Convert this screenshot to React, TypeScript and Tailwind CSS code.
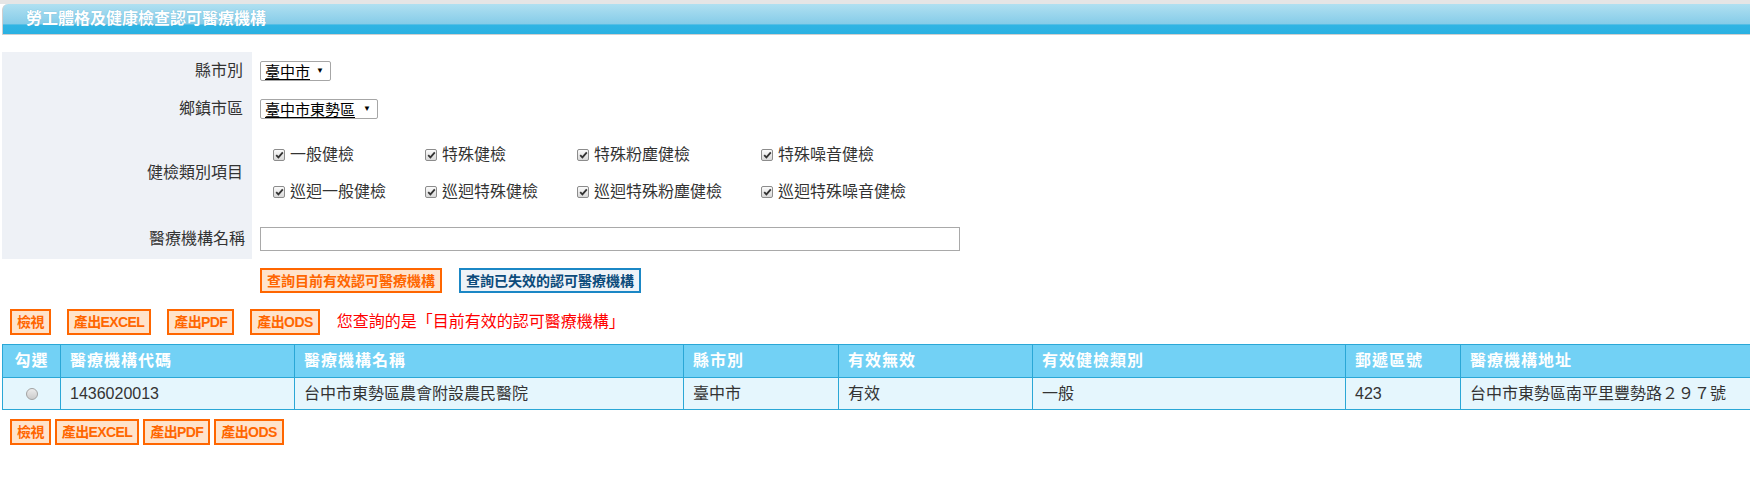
const cjk = "font-['Liberation_Sans','Noto_Sans_CJK_TC',sans-serif]";

const checks = [
  ["一般健檢", "特殊健檢", "特殊粉塵健檢", "特殊噪音健檢"],
  ["巡迴一般健檢", "巡迴特殊健檢", "巡迴特殊粉塵健檢", "巡迴特殊噪音健檢"],
];

const cols = [
  { title: "勾選", w: 58 },
  { title: "醫療機構代碼", w: 234 },
  { title: "醫療機構名稱", w: 389 },
  { title: "縣市別", w: 155 },
  { title: "有效無效", w: 194 },
  { title: "有效健檢類別", w: 313 },
  { title: "郵遞區號", w: 115 },
  { title: "醫療機構地址", w: 292 },
];

const row = ["1436020013", "台中市東勢區農會附設農民醫院", "臺中市", "有效", "一般", "423", "台中市東勢區南平里豐勢路２９７號"];

function Box() {
  return (
    <span className="inline-flex items-center justify-center w-[12px] h-[12px] border border-[#8c8c8c] rounded-[2px] bg-gradient-to-b from-[#fbfbfb] to-[#d9d9d9]">
      <svg width="9" height="8" viewBox="0 0 9 8">
        <path d="M1.2 4.2 L3.4 6.4 L7.8 1.4" stroke="#333" strokeWidth="1.8" fill="none" />
      </svg>
    </span>
  );
}

function Btn({ children }: { children: React.ReactNode }) {
  return (
    <span className="inline-flex items-center h-[26px] px-[5px] border-2 border-[#ff6600] bg-[#ffe3cb] text-[#ff6600] text-[14px] font-bold leading-none tracking-[-0.6px]">
      {children}
    </span>
  );
}

function Select({ text, w }: { text: string; w: string }) {
  return (
    <span className={`inline-flex items-center justify-between h-[20px] ${w} pl-[4px] pr-[6px] border border-[#a6a6a6] rounded-[2px] bg-white text-[15px] leading-none text-black`}>
      <span className="underline underline-offset-2">{text}</span>
      <span className="text-[8px]">▼</span>
    </span>
  );
}

export default function App() {
  return (
    <div className={`w-[1750px] h-[488px] overflow-hidden bg-white ${cjk}`}>
      <div className="h-[4px] bg-[#e5e5e5]" />
      <div className="ml-[2px] h-[31px] rounded-tl-[6px] border-l border-b border-[#cfcfcf] bg-[linear-gradient(to_bottom,#b0e0f1_0%,#86cce8_66%,#30b4e3_70%,#2ab1e2_100%)] flex items-center pl-[23px]">
        <span className="text-white text-[16px] font-bold [text-shadow:0_0_1px_#5aaed0]">勞工體格及健康檢查認可醫療機構</span>
      </div>

      <div className="mt-[17px] ml-[2px] grid grid-cols-[250px_1fr] text-[16px] text-[#333]">
        <div className="h-[38px] bg-[#eef1f6] flex items-center justify-end pr-[9px]">縣市別</div>
        <div className="h-[38px] flex items-center pl-[8px]">
          <Select text="臺中市" w="w-[71px]" />
        </div>
        <div className="h-[38px] bg-[#eef1f6] flex items-center justify-end pr-[9px]">鄉鎮市區</div>
        <div className="h-[38px] flex items-center pl-[8px]">
          <Select text="臺中市東勢區" w="w-[118px]" />
        </div>
        <div className="h-[90px] bg-[#eef1f6] flex items-center justify-end pr-[9px]">健檢類別項目</div>
        <div className="h-[90px] flex flex-col justify-center pl-[21px]">
          {checks.map((r, i) => (
            <div key={i} className="grid grid-cols-[152px_152px_184px_auto] h-[37px] items-center">
              {r.map((c) => (
                <span key={c} className="flex items-center gap-[5px]">
                  <Box />
                  {c}
                </span>
              ))}
            </div>
          ))}
        </div>
        <div className="h-[41px] bg-[#eef1f6] flex items-center justify-end pr-[7px]">醫療機構名稱</div>
        <div className="h-[41px] flex items-center pl-[8px]">
          <div className="w-[700px] h-[24px] border border-[#a9a9a9] bg-white" />
        </div>
      </div>

      <div className="mt-[9px] ml-[260px] flex gap-[17px] text-[14px] font-bold leading-none">
        <span className="inline-flex items-center h-[25px] px-[5px] border-2 border-[#ff6600] bg-[#ffe3cb] text-[#ff6600]">查詢目前有效認可醫療機構</span>
        <span className="inline-flex items-center h-[25px] px-[5px] border-2 border-[#1b87c5] bg-[#eef3f8] text-[#0b4b7b]">查詢已失效的認可醫療機構</span>
      </div>

      <div className="mt-[16px] ml-[10px] flex items-center gap-[16px]">
        <Btn>檢視</Btn>
        <Btn>產出EXCEL</Btn>
        <Btn>產出PDF</Btn>
        <Btn>產出ODS</Btn>
        <span className="ml-[1px] text-[16px] text-[#ff0000]">您查詢的是「目前有效的認可醫療機構」</span>
      </div>

      <table className="mt-[9px] ml-[2px] table-fixed border-collapse w-[1750px] text-[16px]">
        <colgroup>
          {cols.map((c) => (
            <col key={c.title} style={{ width: c.w }} />
          ))}
        </colgroup>
        <thead>
          <tr className="h-[33px] bg-[#72d1f5]">
            {cols.map((c, i) => (
              <th
                key={c.title}
                className={`border border-[#2aa7d6] text-white font-bold tracking-[1px] ${i === 0 ? "text-center" : "text-left pl-[9px]"}`}
              >
                {c.title}
              </th>
            ))}
          </tr>
        </thead>
        <tbody>
          <tr className="h-[32px] bg-[#e5f6fd] text-[#333]">
            <td className="border border-[#2aa7d6]">
              <span className="mx-auto block w-[12px] h-[12px] rounded-full border border-[#a3a3a3] bg-gradient-to-b from-[#ececec] to-[#cbcbcb]" />
            </td>
            {row.map((v, i) => (
              <td key={i} className="border border-[#2aa7d6] pl-[9px]">
                {v}
              </td>
            ))}
          </tr>
        </tbody>
      </table>

      <div className="mt-[9px] ml-[10px] flex items-center gap-[4px]">
        <Btn>檢視</Btn>
        <Btn>產出EXCEL</Btn>
        <Btn>產出PDF</Btn>
        <Btn>產出ODS</Btn>
      </div>
    </div>
  );
}
